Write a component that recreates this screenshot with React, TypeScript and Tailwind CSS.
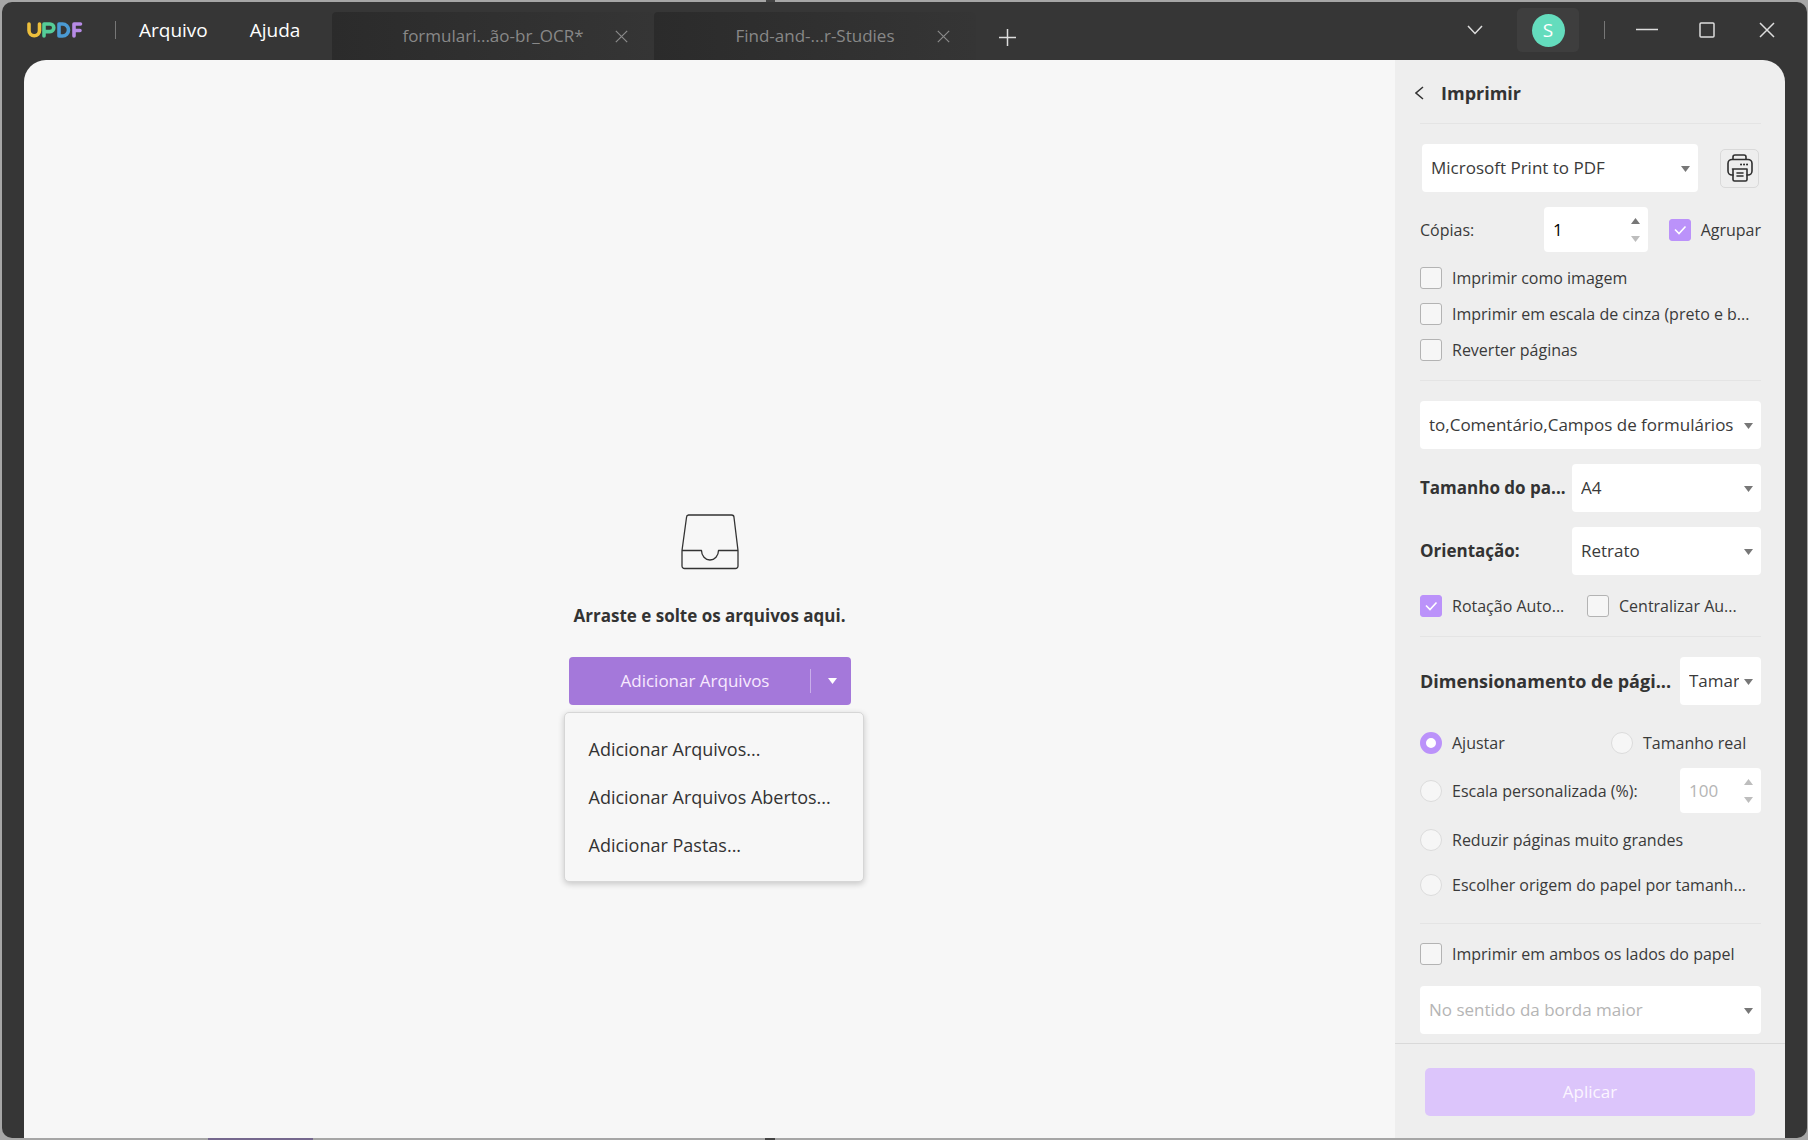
import { useState } from "react"
import type { ReactNode } from "react"
import clsx from "clsx"

// ─── Icons ─────────────────────────────────────────────────────────────────────

function Logo() {
  return (
    <svg width="56" height="18" viewBox="0 0 56 18" fill="none" strokeWidth="3.600" strokeLinecap="round" strokeLinejoin="round" role="img" aria-label="UPDF">
      <path d="M2 3v6.500a5 5 0 0 0 10.500 0V3" stroke="#edbf3c" />
      <path d="M17 15V3h6a3.800 3.800 0 0 1 0 7.600h-5" stroke="#55cc98" />
      <path d="M32 3v12h3.500a6 6 0 0 0 0-12H32z" stroke="#4a9ad4" />
      <path d="M47 15V3h6.500M47 9.500h6" stroke="#b78be6" />
    </svg>
  )
}

function Cross({ size }: { size: number }) {
  return (
    <svg width={size} height={size} viewBox="0 0 16 16" fill="none" stroke="currentColor" strokeWidth="1.500">
      <path d="M1 1l14 14M15 1L1 15" />
    </svg>
  )
}

function Triangle({ up = false, className }: { up?: boolean; className?: string }) {
  return (
    <svg width="9" height="6" viewBox="0 0 9 6" fill="currentColor" className={className}>
      <path d={up ? "M0 6L4.500 0L9 6z" : "M0 0h9L4.500 6z"} />
    </svg>
  )
}

function PrinterIcon() {
  return (
    <svg width="26" height="28" viewBox="0 0 26 28" fill="none" stroke="#2f2f2f" strokeWidth="1.600" strokeLinejoin="round" strokeLinecap="round">
      <path d="M6 5V3a2 2 0 0 1 2-2h9a2 2 0 0 1 2 2v2" />
      <path d="M6 21H5a4 4 0 0 1-4-4V9.500a4 4 0 0 1 4-4h16a4 4 0 0 1 4 4V17a4 4 0 0 1-4 4h-1" />
      <path d="M5.500 15h14.500v10.500a1.500 1.500 0 0 1-1.500 1.500H7.500a1.500 1.500 0 0 1-1.500-1.500V15M10 19h6M10 22h6" />
      <path d="M14 10.500h.1M17 10.500h.1M20 10.500h.1" strokeWidth="2" />
    </svg>
  )
}

function TrayIcon() {
  return (
    <svg width="58" height="56" viewBox="0 0 58 56" fill="none" stroke="#333" strokeWidth="1.300" strokeLinejoin="round">
      <path d="M1 36.500h19.500a8.500 9.500 0 0 0 17 0H57L53 3.500A2.500 2.500 0 0 0 50.500 1h-43A2.500 2.500 0 0 0 5.500 3.500L1 36.500v15.500a2.500 2.500 0 0 0 2.500 2.500h51a2.500 2.500 0 0 0 2.500-2.500V36.500" />
    </svg>
  )
}

// ─── Form controls ─────────────────────────────────────────────────────────────

function Select({ label, value, disabled, className }: { label: string; value: string; disabled?: boolean; className?: string }) {
  return (
    <div className={clsx("relative", className)}>
      <select
        aria-label={label}
        disabled={disabled}
        className="h-12 w-full appearance-none rounded-[4px] bg-white pl-[9px] pr-[22px] text-[17px] text-[#3a3a3a] opacity-100 disabled:text-[#b5b5b5]"
      >
        <option>{value}</option>
      </select>
      <Triangle className="pointer-events-none absolute right-2 top-[22px] text-[#777]" />
    </div>
  )
}

function Spinner({ label, value, disabled, className }: { label: string; value: string; disabled?: boolean; className?: string }) {
  return (
    <div className={clsx("flex h-[45px] items-center rounded-[4px] bg-white pl-[9px] pr-2", className)}>
      <input
        aria-label={label}
        defaultValue={value}
        disabled={disabled}
        inputMode="numeric"
        className="w-0 flex-1 bg-transparent text-[17px] text-black disabled:text-[#b5b5b5]"
      />
      <div className="flex flex-col gap-3">
        <button type="button" aria-label="Aumentar" disabled={disabled} className="text-[#777] disabled:text-[#bdbdbd]">
          <Triangle up className="block" />
        </button>
        <button type="button" aria-label="Diminuir" disabled={disabled} className="text-[#bdbdbd]">
          <Triangle className="block" />
        </button>
      </div>
    </div>
  )
}

function Check({ children, checked = false, className }: { children: ReactNode; checked?: boolean; className?: string }) {
  return (
    <label className={clsx("flex h-9 items-center gap-[10px] whitespace-nowrap text-base text-[#3a3a3a]", className)}>
      <span className="grid size-[22px] shrink-0">
        <input
          type="checkbox"
          defaultChecked={checked}
          className="peer col-start-1 row-start-1 size-[22px] appearance-none rounded-[3px] border border-[#b3b3b3] bg-[#f6f6f6] checked:border-[#bb92fa] checked:bg-[#bb92fa]"
        />
        <svg viewBox="0 0 22 22" fill="none" stroke="white" strokeWidth="1.600" className="pointer-events-none invisible col-start-1 row-start-1 peer-checked:visible">
          <path d="M6 10.500l4 4 6.500-7" />
        </svg>
      </span>
      {children}
    </label>
  )
}

function Radio({ children, checked = false, className }: { children: ReactNode; checked?: boolean; className?: string }) {
  return (
    <label className={clsx("flex h-9 items-center gap-[10px] whitespace-nowrap text-base text-[#3a3a3a]", className)}>
      <input
        type="radio"
        name="escala"
        defaultChecked={checked}
        className="size-[22px] shrink-0 appearance-none rounded-full border border-[#dcdcdc] bg-[#f6f6f6] checked:border-[6px] checked:border-[#bb92fa] checked:bg-white"
      />
      {children}
    </label>
  )
}

// ─── Title bar ─────────────────────────────────────────────────────────────────

const tabs = ["formulari...ão-br_OCR*", "Find-and-...r-Studies"]

function TitleBar() {
  return (
    <header className="flex h-[58px] items-center text-white">
      <div className="flex h-full w-[330px] shrink-0 items-center pb-[2px] pl-[25px]">
        <Logo />
        <div className="ml-8 h-[18px] w-px bg-[#777]" />
        <nav className="ml-[23px] flex gap-[42px] text-[19px]">
          <button type="button">Arquivo</button>
          <button type="button">Ajuda</button>
        </nav>
      </div>
      <div className="flex h-full items-end">
        {tabs.map((tab) => (
          <div key={tab} className="grid h-12 w-[322px] grid-cols-[50px_1fr_50px] items-center rounded-t-[4px] bg-linear-to-r from-[#2b2b2b] to-[#353535] text-[17px] text-[#888]">
            <span className="col-start-2 text-center">{tab}</span>
            <button type="button" aria-label={`Fechar ${tab}`} className="pl-[11px]">
              <Cross size={13} />
            </button>
          </div>
        ))}
        <button type="button" aria-label="Nova aba" className="mb-[14px] ml-[23px]">
          <svg width="17" height="17" viewBox="0 0 17 17" stroke="#ddd" strokeWidth="1.500">
            <path d="M8.500 0v17M0 8.500h17" />
          </svg>
        </button>
      </div>
      <div className="ml-auto flex h-full items-center pb-[2px] pr-8 text-[#ddd]">
        <button type="button" aria-label="Lista de abas">
          <svg width="16" height="10" viewBox="0 0 16 10" fill="none" stroke="currentColor" strokeWidth="1.500">
            <path d="M1 1l7 7.500L15 1" />
          </svg>
        </button>
        <button type="button" aria-label="Conta" className="ml-[34px] grid h-11 w-[62px] place-items-center rounded-[5px] bg-[#3e3e3e]">
          <span className="grid size-[33px] place-items-center rounded-full bg-[#64dcbd] text-[19px] text-white">S</span>
        </button>
        <div className="ml-[25px] h-[18px] w-px bg-[#777]" />
        <button type="button" aria-label="Minimizar" className="ml-[31px]">
          <svg width="22" height="16" viewBox="0 0 22 16" stroke="currentColor" strokeWidth="1.500">
            <path d="M0 7.500h22" />
          </svg>
        </button>
        <button type="button" aria-label="Maximizar" className="ml-[41px]">
          <svg width="16" height="16" viewBox="0 0 16 16" fill="none" stroke="currentColor" strokeWidth="1.500">
            <rect x="1" y="1" width="14" height="14" rx="1" />
          </svg>
        </button>
        <button type="button" aria-label="Fechar" className="ml-11">
          <Cross size={16} />
        </button>
      </div>
    </header>
  )
}

// ─── Drop area ─────────────────────────────────────────────────────────────────

const menuItems = ["Adicionar Arquivos...", "Adicionar Arquivos Abertos...", "Adicionar Pastas..."]

function DropArea() {
  const [open, setOpen] = useState(true)

  return (
    <main className="flex flex-1 flex-col items-center justify-center bg-[#f7f7f7] pt-5 text-[#333]">
      <TrayIcon />
      <p className="mt-[34px] text-[17px] font-bold leading-6">Arraste e solte os arquivos aqui.</p>
      <div className="relative mt-[29px]">
        <div className="flex h-12 w-[282px] items-center rounded-[4px] bg-[#a478da] text-[17px] text-[#f8eaff]">
          <button type="button" className="h-full flex-1 pl-3">Adicionar Arquivos</button>
          <div className="h-6 w-px bg-[#c9aeea]" />
          <button type="button" aria-label="Mais opções" aria-expanded={open} onClick={() => setOpen(!open)} className="flex h-full w-10 items-center justify-center pl-1">
            <Triangle className="text-white" />
          </button>
        </div>
        {open && (
          <ul className="absolute -left-[5px] top-[55px] w-[300px] rounded-[5px] border border-[#d6d6d6] bg-[#f7f7f7] px-6 py-3 text-lg shadow-[0_2px_6px_rgba(0,0,0,0.2)]">
            {menuItems.map((item) => (
              <li key={item}>
                <button type="button" className="h-12 whitespace-nowrap">{item}</button>
              </li>
            ))}
          </ul>
        )}
      </div>
    </main>
  )
}

// ─── Print panel ───────────────────────────────────────────────────────────────

function PrintPanel() {
  return (
    <aside className="flex w-[390px] shrink-0 flex-col bg-[#eee] text-[#333]">
      <div className="flex-1 pl-[25px] pr-6">
        <div className="flex h-16 items-center gap-[17px] border-b border-[#e4e4e4] pt-[3px]">
          <button type="button" aria-label="Voltar" className="-ml-[5px]">
            <svg width="9" height="14" viewBox="0 0 9 14" fill="none" stroke="#333" strokeWidth="1.500">
              <path d="M8 1L1 7l7 6" />
            </svg>
          </button>
          <h1 className="text-[18px] font-bold">Imprimir</h1>
        </div>

        <section className="border-b border-[#e4e4e4] pb-3 pt-5">
          <div className="flex items-center justify-between px-[2px]">
            <Select label="Impressora" value="Microsoft Print to PDF" className="w-[276px]" />
            <button type="button" aria-label="Propriedades da impressora" className="grid size-[39px] place-items-center rounded-[5px] border border-[#d9d9d9]">
              <PrinterIcon />
            </button>
          </div>
          <div className="mt-[15px] flex items-center">
            <span className="w-[126px] text-base text-[#3a3a3a]">Cópias:</span>
            <Spinner label="Cópias" value="1" className="w-[105px]" />
            <Check checked className="ml-[21px]">Agrupar</Check>
          </div>
          <div className="mt-2">
            <Check>Imprimir como imagem</Check>
            <Check>Imprimir em escala de cinza (preto e b...</Check>
            <Check>Reverter páginas</Check>
          </div>
        </section>

        <section className="border-b border-[#e4e4e4] pb-3 pt-5">
          <Select label="Conteúdo" value="to,Comentário,Campos de formulários" />
          <div className="mt-[15px] flex items-center justify-between">
            <span className="whitespace-nowrap text-[17px] font-bold">Tamanho do pa...</span>
            <Select label="Tamanho do papel" value="A4" className="w-[189px]" />
          </div>
          <div className="mt-[15px] flex items-center justify-between">
            <span className="text-[17px] font-bold">Orientação:</span>
            <Select label="Orientação" value="Retrato" className="w-[189px]" />
          </div>
          <div className="mt-[13px] flex">
            <Check checked className="w-[167px]">Rotação Auto...</Check>
            <Check>Centralizar Au...</Check>
          </div>
        </section>

        <section className="border-b border-[#e4e4e4] pb-5 pt-5">
          <div className="flex items-center justify-between">
            <h2 className="whitespace-nowrap text-[18px] font-bold">Dimensionamento de pági...</h2>
            <Select label="Dimensionamento de páginas" value="Tamar" className="w-[81px] shrink-0" />
          </div>
          <div className="mt-5 flex">
            <Radio checked className="w-[191px]">Ajustar</Radio>
            <Radio>Tamanho real</Radio>
          </div>
          <div className="mt-[7px] flex items-center justify-between">
            <Radio>Escala personalizada (%):</Radio>
            <Spinner label="Escala personalizada" value="100" disabled className="w-[81px]" />
          </div>
          <Radio className="mt-[9px]">Reduzir páginas muito grandes</Radio>
          <Radio className="mt-[9px]">Escolher origem do papel por tamanh...</Radio>
        </section>

        <section className="pb-[9px] pt-3">
          <Check>Imprimir em ambos os lados do papel</Check>
          <Select label="Encadernação" value="No sentido da borda maior" disabled className="mt-[14px]" />
        </section>
      </div>

      <div className="border-t border-[#d9d9d9] px-[30px] pb-[22px] pt-6">
        <button type="button" disabled className="h-12 w-full rounded-[5px] bg-[#dcc5fb] text-[17px] text-[#fbf5ff]">
          Aplicar
        </button>
      </div>
    </aside>
  )
}

// ─── App ───────────────────────────────────────────────────────────────────────

export default function App() {
  return (
    <div className="flex min-h-screen flex-col bg-[#a6a6a6] pl-[2px] pr-px font-['Open_Sans','Noto_Sans',sans-serif]">
      <div className="h-[2px] pl-[764px]">
        <div className="h-full w-[9px] bg-[#444]" />
      </div>
      <div className="flex flex-1 flex-col overflow-hidden rounded-[10px] bg-[#363636]">
        <TitleBar />
        <div className="ml-[22px] mr-[22px] flex flex-1 overflow-hidden rounded-t-[22px]">
          <DropArea />
          <PrintPanel />
        </div>
      </div>
      <div className="flex h-[2px] gap-[452px] pl-[206px]">
        <div className="w-[105px] bg-[#75688e]" />
        <div className="w-[10px] bg-[#444]" />
      </div>
    </div>
  )
}
